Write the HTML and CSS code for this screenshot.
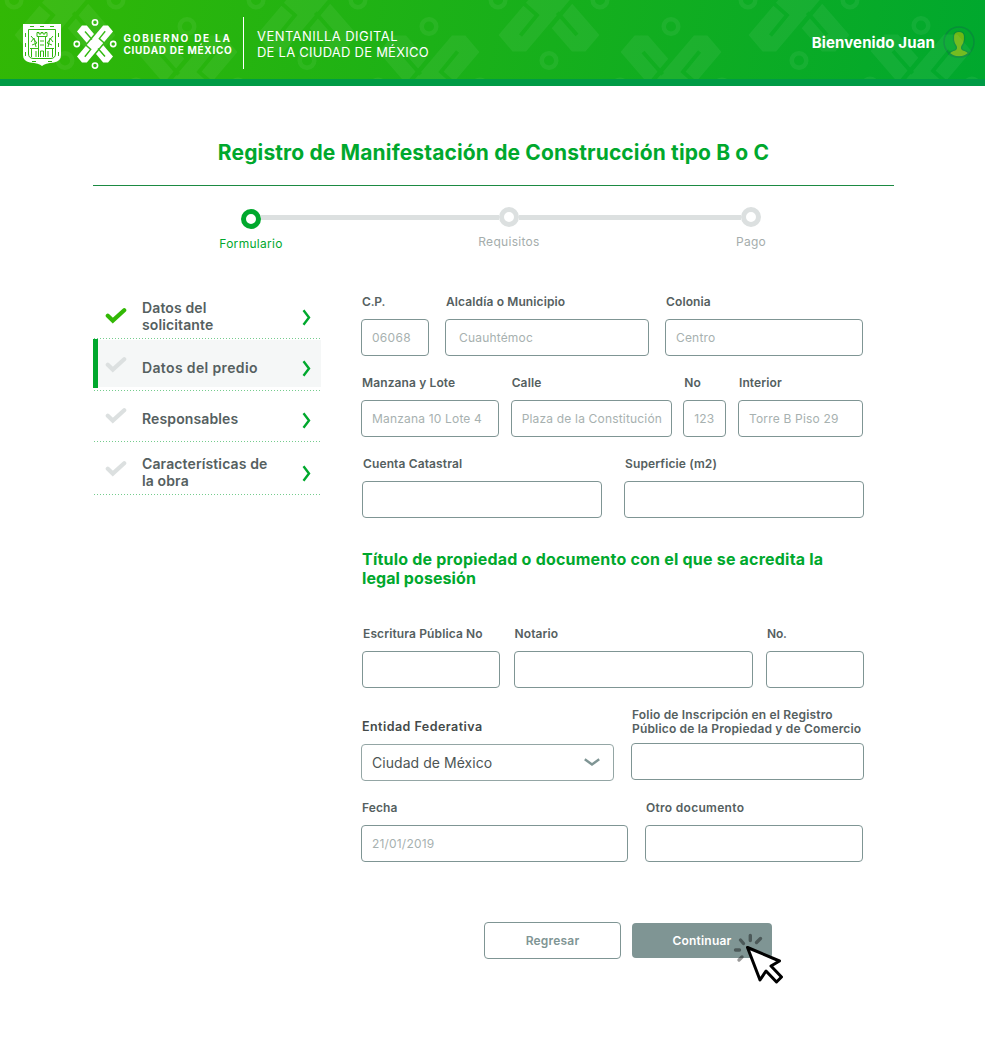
FILE: index.html
```html
<!DOCTYPE html>
<html lang="es">
<head>
<meta charset="utf-8">
<title>Ventanilla Digital</title>
<link rel="stylesheet" href="styles.css">
</head>
<body>
<svg class="defs" width="0" height="0">
  <mask id="slits" maskUnits="userSpaceOnUse" x="-25" y="-25" width="50" height="50">
    <rect x="-25" y="-25" width="50" height="50" fill="#fff"/>
    <path fill="none" stroke="#000" stroke-width="1.4" d="M-10.2 12.7L-4.300 5.400L-9.500 .8M10.200 -12.700L4.300 -5.400L9.500 -.8M-10 -12.500L-3 -4.500M10 12.500L3 4.500"/>
  </mask>
  <symbol id="cdmx" viewBox="-25 -25 50 50" overflow="visible">
    <g mask="url(#slits)" fill="currentColor">
      <path d="M-18 12.500L-13 18.400H-8.200L18 -12.500L13 -18.400H8.200Z"/>
      <path d="M-18 -12.500L-13 -18.400H-8.200L-1 -10.100L-8.300 -1.300Z"/>
      <path d="M18 12.500L13 18.400H8.200L1 10.100L8.300 1.300Z"/>
    </g>
    <g fill="none" stroke="currentColor" stroke-width="1.6"><circle cy="-21.6" r="2.6"/><circle cy="21.6" r="2.6"/><circle cx="-18.2" r="2.6"/><circle cx="18.2" r="2.6"/></g>
  </symbol>
  <symbol id="check" viewBox="0 0 22 17"><path d="M2.8 8.8L7.8 13.6L19.2 3.2" fill="none" stroke="currentColor" stroke-width="4.2" stroke-linecap="round"/></symbol>
  <symbol id="chev" viewBox="0 0 9 17"><path d="M1.5 1.2L7 8.5L1.5 15.8" fill="none" stroke="#00a82d" stroke-width="2.4"/></symbol>
</svg>
<header class="top">
  <svg class="pattern" width="985" height="79" viewBox="0 0 985 79">
    <use href="#cdmx" x="-5" y="-70" width="140" height="140"/>
    <use href="#cdmx" x="117" y="17" width="140" height="140"/>
    <use href="#cdmx" x="237" y="-70" width="140" height="140"/>
    <use href="#cdmx" x="359" y="17" width="140" height="140"/>
    <use href="#cdmx" x="479" y="-70" width="140" height="140"/>
    <use href="#cdmx" x="601" y="17" width="140" height="140"/>
    <use href="#cdmx" x="729" y="-70" width="140" height="140"/>
    <use href="#cdmx" x="851" y="16" width="140" height="140"/>
  </svg>
  <svg class="shield" width="39" height="43" viewBox="0 0 39 43">
    <path fill="#fff" d="M0 0H38V31Q38 37 31 38.500Q22 39 19 42Q16 39 7 38.500Q0 37 0 31Z"/>
    <path fill="none" stroke="#2cb50b" d="M5.500 5.500H32.500V30Q32.500 34 28 34.500H10Q5.500 34 5.500 30Z"/>
    <path fill="#2cb50b" d="M7 2h4v1H7zM17 2h4v1h-4zM27 2h4v1h-4zM2 9h1v4H2zM2 19h1v4H2zM2 28h1v4H2zM35 9h1v4h-1zM35 19h1v4h-1zM35 28h1v4h-1zM9 37h4v1H9zM25 37h4v1h-4z"/>
    <path fill="none" stroke="#2cb50b" d="M15.500 33V13M22.500 33V13M14 12.500V8.500H16V10H18V8.500H20V10H22V8.500H24V12.500ZM7 24.500H15M23 24.500H31M8.500 33V25M13 33V27M25 33V27M29.500 33V25M17.500 33V27H20.500V33M8 12L14 19L9 21M30 12L24 19L29 21M8 18L11 14L13 23M30 18L27 14L25 23M17 17H21M17 21H21"/>
  </svg>
  <svg class="logo" width="50" height="50"><use href="#cdmx" width="50" height="50"/></svg>
  <div class="gov"><span class="g1">GOBIERNO DE LA</span><br><span class="g2">CIUDAD DE MÉXICO</span></div>
  <div class="app"><span class="a1">VENTANILLA DIGITAL</span><br><span class="a2">DE LA CIUDAD DE MÉXICO</span></div>
  <span class="hello">Bienvenido Juan</span>
  <svg class="avatar" width="32" height="32" viewBox="0 0 32 32"><path fill="#6cb814" stroke="#078f39" stroke-width="1.2" d="M5.500 28Q7 25.500 12 24Q14 23 13.200 20.500Q11 18 10.500 14V10Q11 5.500 16 5.500Q21 5.500 21.500 10V14Q21 18 18.800 20.500Q18 23 20 24Q25 25.500 26.500 28Q22 31.200 16 31.200Q10 31.200 5.500 28Z"/><circle cx="16" cy="16" r="15" fill="none" stroke="#078f39" stroke-width="1.500"/></svg>
</header>
<main class="page">
  <h1>Registro de Manifestación de Construcción tipo B o C</h1>
  <ol class="steps">
    <li class="step on"><i></i><span>Formulario</span></li>
    <li class="bar b1"></li>
    <li class="step"><i></i><span>Requisitos</span></li>
    <li class="bar b2"></li>
    <li class="step"><i></i><span>Pago</span></li>
  </ol>
  <div class="cols">
    <nav class="side">
      <a class="n1"><svg class="ck"><use href="#check"/></svg><b>Datos del<br>solicitante</b><svg class="cv"><use href="#chev"/></svg></a>
      <a class="n2"><svg class="ck"><use href="#check"/></svg><b class="loose">Datos del predio</b><svg class="cv"><use href="#chev"/></svg></a>
      <a class="n3"><svg class="ck"><use href="#check"/></svg><b>Responsables</b><svg class="cv"><use href="#chev"/></svg></a>
      <a class="n4"><svg class="ck"><use href="#check"/></svg><b>Características de<br>la obra</b><svg class="cv"><use href="#chev"/></svg></a>
    </nav>
    <form class="form">
      <div class="row r1">
        <label><span class="tight">C.P.</span><em><span class="loose">06068</span></em></label>
        <label><span>Alcaldía o Municipio</span><em class="wide"><span>Cuauhtémoc</span></em></label>
        <label><span>Colonia</span><em><span>Centro</span></em></label>
      </div>
      <div class="row r2">
        <label><span>Manzana y Lote</span><em><span>Manzana 10 Lote 4</span></em></label>
        <label><span>Calle</span><em><span>Plaza de la Constitución</span></em></label>
        <label><span>No</span><em><span>123</span></em></label>
        <label><span>Interior</span><em><span>Torre B Piso 29</span></em></label>
      </div>
      <div class="row r3">
        <label><span>Cuenta Catastral</span><em></em></label>
        <label><span>Superficie (m2)</span><em></em></label>
      </div>
      <h2><span class="t1">Título de propiedad o documento con el que se acredita la</span><br>legal posesión</h2>
      <div class="row r4">
        <label><span>Escritura Pública No</span><em></em></label>
        <label><span>Notario</span><em></em></label>
        <label><span class="tight">No.</span><em></em></label>
      </div>
      <div class="row r5">
        <label class="sel"><span>Entidad Federativa</span><em><span>Ciudad de México</span><svg width="16" height="9" viewBox="0 0 16 9"><path d="M.8 1.300L8 6.500L15.200 1.300" fill="none" stroke="#7f9594" stroke-width="2.400"/></svg></em></label>
        <label class="two"><span>Folio de Inscripción en el Registro<br>Público de la Propiedad y de Comercio</span><em></em></label>
      </div>
      <div class="row r6">
        <label><span>Fecha</span><em><span>21/01/2019</span></em></label>
        <label><span class="loose">Otro documento</span><em></em></label>
      </div>
      <div class="actions">
        <button type="button" class="back">Regresar</button>
        <button type="button" class="next">Continuar
          <svg class="cursor" width="52" height="52" viewBox="0 0 52 52"><g stroke="#000" stroke-opacity=".4" stroke-width="3.400" stroke-linecap="round"><path d="M17.300 3.500V8.500M7.500 8L10.500 11.500M27.500 6.500L23.500 10.500M2.500 18H6.500M6 28L9 25"/></g><path fill="#fff" stroke="#000" stroke-width="3" stroke-linejoin="round" d="M14.500 15.500L46.500 29L38 34L48.500 45L43.500 50L33 39L27 48Z"/></svg>
        </button>
      </div>
    </form>
  </div>
</main>
</body>
</html>
```
FILE: styles.css
```css
* { box-sizing: border-box; }
body { margin: 0; background: #fff; font-family: Inter, sans-serif; color: #55605f; width: 985px; height: 1056px; overflow: hidden; }
.defs { position: absolute; }
.top { position: relative; display: flex; align-items: flex-start; height: 86px; background: linear-gradient(100deg, #32b805, #00a82e); border-bottom: 7px solid #009b45; color: #fff; }
.top > * { flex: none; }
.pattern { position: absolute; left: 0; top: 0; opacity: .055; }
.shield { margin: 24px 0 0 23px; }
.logo { margin: 19px 0 0 7.5px; }
.gov { margin: 32px 0 0 4px; width: 119.5px; font-size: 10px; font-weight: 700; line-height: 12px; white-space: nowrap; }
.g1 { letter-spacing: 1.74px; }
.g2 { letter-spacing: .7px; }
.app { margin: 17px 0 0 0; height: 52px; border-left: 1px solid #fff; padding: 11px 0 0 13px; font-size: 13px; line-height: 16px; white-space: nowrap; }
.a1 { letter-spacing: .44px; }
.a2 { letter-spacing: .24px; }
.hello { margin: 34px 8px 0 auto; font-size: 15px; font-weight: 700; line-height: 18px; letter-spacing: .12px; }
.avatar { margin: 26px 10px 0 0; }
.page { padding: 0 91px 0 93px; }
h1 { margin: 0; height: 100px; padding-top: 55px; border-bottom: 1px solid #1b8a42; font-size: 21px; line-height: 24px; font-weight: 700; letter-spacing: .14px; color: #00a82d; text-align: center; white-space: nowrap; }
.steps { display: flex; list-style: none; margin: 0; padding: 21px 0 0 148px; height: 108px; font-size: 12px; line-height: 16px; letter-spacing: .3px; color: #a5adac; }
.step { width: 20px; display: flex; flex-direction: column; align-items: center; gap: 7px; white-space: nowrap; }
.step i { flex: none; width: 20px; height: 20px; border: 5px solid #dce0e0; border-radius: 50%; }
.on { color: #00a82d; padding-top: 2px; }
.on i { border-color: #00a82d; }
.bar { height: 5px; margin-top: 8px; background: #dce0e0; }
.b1 { width: 238px; }
.b2 { width: 222px; }
.cols { display: flex; }
.side { width: 228px; font-size: 14px; line-height: 17px; }
.side a { display: flex; align-items: center; padding: 4px 0 0 12px; background: repeating-linear-gradient(90deg, #74cc8d 0 1px, transparent 1px 3px) 1px 100% / 227px 1px no-repeat; }
.side b { flex: 1; padding-left: 15px; font-weight: 600; letter-spacing: .12px; white-space: nowrap; }
.side b.loose { letter-spacing: .36px; }
.ck { width: 22px; height: 17px; margin-bottom: 6px; color: #dce0e0; }
.cv { width: 9px; height: 17px; margin: 3px 10px 0 0; }
.side .n1 { height: 45px; padding: 0 0 2px 12px; }
.n1 .ck { color: #32b805; margin: 0; }
.side .n2 { height: 52px; padding-left: 12px; background: linear-gradient(#00a82d, #00a82d) 0 0 / 5px 49px no-repeat, repeating-linear-gradient(90deg, #74cc8d 0 1px, transparent 1px 3px) 1px 100% / 227px 1px no-repeat, linear-gradient(#f5f7f7, #f5f7f7) 5px 1px / 223px 47px no-repeat; }
.n3 { height: 51px; }
.side .n4 { height: 53px; padding-top: 6px; }
.form { margin-left: 40px; width: 503px; font-size: 12px; }
.row { display: grid; height: 81px; }
.row label { display: flex; flex-direction: column; font-weight: 600; line-height: 16px; letter-spacing: .12px; white-space: nowrap; }
.row label > span { padding-left: 1px; align-self: flex-start; }
.row em { display: flex; align-items: center; height: 37px; margin-top: 9px; padding-left: 10px; border: 1px solid #7f9594; border-radius: 4px; font-style: normal; font-weight: 400; letter-spacing: .18px; color: #a7b1b0; }
.row em.wide { padding-left: 13px; }
.row .tight { letter-spacing: -.15px; }
.row label .loose { letter-spacing: .3px; }
h2 { margin: 13px 0 0 1px; height: 76px; font-size: 16px; line-height: 19px; font-weight: 700; letter-spacing: .08px; color: #00a82d; white-space: nowrap; }
.t1 { letter-spacing: .21px; }
.r1 { grid-template-columns: 68px 204px 198px; gap: 16px; }
.r2 { grid-template-columns: 138px 161px 43px 125px; justify-content: space-between; width: 502px; }
.r3 { grid-template-columns: 240px 240px; gap: 22px; margin-left: 1px; }
.r4 { grid-template-columns: 138px 239px 98px; gap: 14px; margin-left: 1px; column-gap: 13.5px; }
.row.r5 { grid-template-columns: 253px 233px; column-gap: 17px; height: 93px; }
.r6 { grid-template-columns: 267px 218px; column-gap: 17px; }
.sel { padding-top: 12px; }
.sel > span { font-size: 12.5px; letter-spacing: .45px; color: #444a49; }
.sel em { justify-content: space-between; padding-right: 13px; font-size: 14px; letter-spacing: .05px; color: #4d5554; border-color: #94a6a5; }
.two { padding-top: 1px; }
.row .two { line-height: 14px; letter-spacing: .18px; }
.row .two em { margin-top: 7px; }
.actions { display: flex; gap: 11px; padding: 41px 0 0 123px; }
.actions button { position: relative; height: 37px; width: 137px; padding: 0; background: #fff; border: 1px solid #7f9594; border-radius: 4px; color: #7f9594; font: 600 12px Inter, sans-serif; letter-spacing: .2px; }
.actions .next { width: 140px; height: 35px; margin-top: 1px; background: #7f9594; color: #fff; border: 0; }
.cursor { position: absolute; left: 101px; top: 9px; }
```
